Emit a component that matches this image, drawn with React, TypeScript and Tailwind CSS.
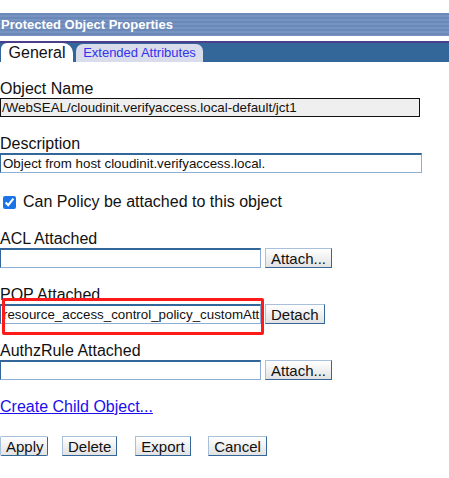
import React from 'react'

const font = { fontFamily: '"Liberation Sans", Arial, sans-serif' }

function Field({ label, children, gap = 'mb-[18px]' }: { label: string; children: React.ReactNode; gap?: string }) {
  return (
    <div className={gap}>
      <div className="text-[16px] leading-[18px] text-[#111]">{label}</div>
      {children}
    </div>
  )
}

function BlueInput({ value = '', width }: { value?: string; width: string }) {
  return (
    <div
      className={`${width} h-[20px] bg-white border border-[#8eaed3] border-t-2 border-t-[#336699] border-l-[#336699] px-[2px] text-[13.33px] leading-[17px] text-[#111] whitespace-nowrap overflow-hidden`}
    >
      {value}
    </div>
  )
}

function Btn({ label, className = '' }: { label: string; className?: string }) {
  return (
    <button
      className={`h-[20px] px-[5px] text-[15px] leading-[17px] text-[#111] bg-[linear-gradient(#ffffff,#e2e2e2)] border border-[#a9c0da] border-r-[#336699] border-b-[#336699] ${className}`}
    >
      {label}
    </button>
  )
}

export default function App() {
  return (
    <div className="w-[449px] h-[478px] bg-white pt-[13px] overflow-hidden" style={font}>
      {/* title bar */}
      <div className="h-[23px] flex items-center px-[1px] text-[13px] font-bold text-white bg-[repeating-linear-gradient(to_bottom,#6a88b8_0px,#6a88b8_2px,#7793c1_2px,#7793c1_4px)]">
        Protected Object Properties
      </div>

      {/* tabs */}
      <div className="mt-[5px] border-t-2 border-[#4a3f8c] bg-[#336699] h-[21px] flex items-end pl-[1px] gap-[3px]">
        <div className="h-[19px] w-[72px] bg-white rounded-tl-[6px] rounded-tr-[10px] flex items-center justify-center text-[16px] leading-[18px] text-[#111]">
          General
        </div>
        <div className="h-[18px] w-[127px] bg-[#d9dcea] rounded-t-[7px] flex items-center justify-center text-[13px] leading-[16px] text-[#3333ee]">
          Extended Attributes
        </div>
      </div>

      <div className="pt-[18px]">
        <Field label="Object Name">
          <div className="w-[420px] h-[19px] bg-[#efefef] border border-[#111] px-[1px] text-[13.33px] leading-[17px] text-[#111] whitespace-nowrap overflow-hidden">
            /WebSEAL/cloudinit.verifyaccess.local-default/jct1
          </div>
        </Field>

        <Field label="Description" gap="mb-[20px]">
          <BlueInput width="w-[422px]" value="Object from host cloudinit.verifyaccess.local." />
        </Field>

        <label className="flex items-center gap-[7px] pl-[3px] mb-[19px] text-[16px] leading-[18px] text-[#111]">
          <input type="checkbox" defaultChecked className="w-[13px] h-[13px] accent-[#1a73e8]" />
          Can Policy be attached to this object
        </label>

        <Field label="ACL Attached">
          <div className="flex items-center gap-[4px]">
            <BlueInput width="w-[261px]" />
            <Btn label="Attach..." />
          </div>
        </Field>

        <Field label="POP Attached">
          <div className="flex items-center gap-[4px]">
            <div className="relative">
              <BlueInput width="w-[261px]" value="resource_access_control_policy_customAtt" />
              <div className="absolute left-[2px] top-[-6px] w-[262px] h-[37px] border-[3px] border-[#ff1a1a] rounded-[2px] pointer-events-none" />
            </div>
            <Btn label="Detach" />
          </div>
        </Field>

        <Field label="AuthzRule Attached">
          <div className="flex items-center gap-[4px]">
            <BlueInput width="w-[261px]" />
            <Btn label="Attach..." />
          </div>
        </Field>

        <a href="#" className="block text-[16px] leading-[18px] text-[#1a0dee] underline w-max">
          Create Child Object...
        </a>

        <div className="mt-[20px] flex items-center">
          <Btn label="Apply" className="border-[#8a8a8a] border-r-[#8a8a8a] border-b-[#8a8a8a] rounded-[2px] w-[48px]" />
          <Btn label="Delete" className="ml-[14px] w-[55px]" />
          <Btn label="Export" className="ml-[18px] w-[56px]" />
          <Btn label="Cancel" className="ml-[17px] w-[59px]" />
        </div>
      </div>
    </div>
  )
}
